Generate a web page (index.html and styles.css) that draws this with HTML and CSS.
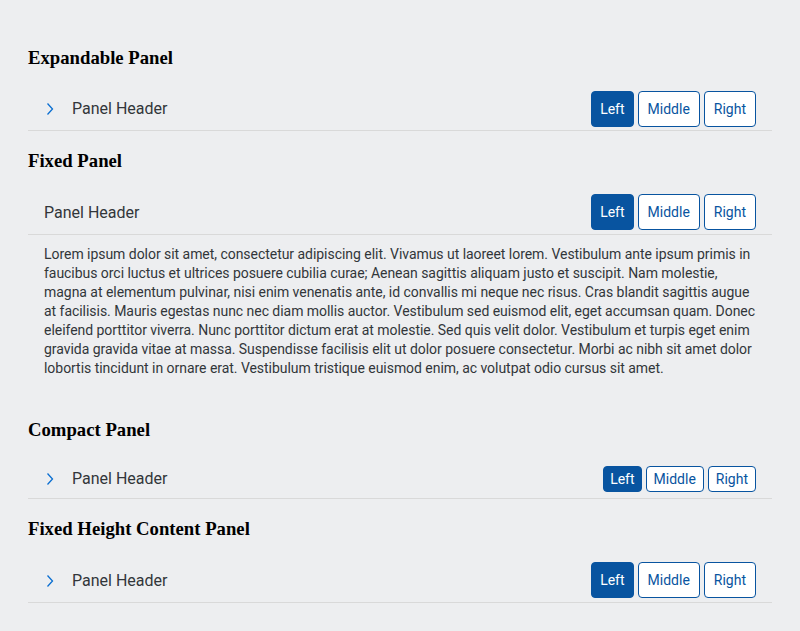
FILE: index.html
```html
<!DOCTYPE html>
<html>
<head>
<meta charset="utf-8">
<link rel="stylesheet" href="styles.css">
</head>
<body>
<div class="page">
  <h3>Expandable Panel</h3>
  <div class="panel">
    <div class="panel-header">
      <span class="chev"><svg width="8" height="14" viewBox="0 0 8 14"><path d="M1.5 1.5 L6.5 7 L1.5 12.5" fill="none" stroke="#0a6ed1" stroke-width="1.3"/></svg></span>
      <span class="title">Panel Header</span>
      <div class="seg">
        <button class="btn active">Left</button>
        <button class="btn">Middle</button>
        <button class="btn">Right</button>
      </div>
    </div>
  </div>

  <h3>Fixed Panel</h3>
  <div class="panel">
    <div class="panel-header">
      <span class="title">Panel Header</span>
      <div class="seg">
        <button class="btn active">Left</button>
        <button class="btn">Middle</button>
        <button class="btn">Right</button>
      </div>
    </div>
    <div class="panel-content">Lorem ipsum dolor sit amet, consectetur adipiscing elit. Vivamus ut laoreet lorem. Vestibulum ante ipsum primis in faucibus orci luctus et ultrices posuere cubilia curae; Aenean sagittis aliquam justo et suscipit. Nam molestie, magna at elementum pulvinar, nisi enim venenatis ante, id convallis mi neque nec risus. Cras blandit sagittis augue at facilisis. Mauris egestas nunc nec diam mollis auctor. Vestibulum sed euismod elit, eget accumsan quam. Donec eleifend porttitor viverra. Nunc porttitor dictum erat at molestie. Sed quis velit dolor. Vestibulum et turpis eget enim gravida gravida vitae at massa. Suspendisse facilisis elit ut dolor posuere consectetur. Morbi ac nibh sit amet dolor lobortis tincidunt in ornare erat. Vestibulum tristique euismod enim, ac volutpat odio cursus sit amet.</div>
  </div>

  <h3>Compact Panel</h3>
  <div class="panel">
    <div class="panel-header compact">
      <span class="chev"><svg width="8" height="14" viewBox="0 0 8 14"><path d="M1.5 1.5 L6.5 7 L1.5 12.5" fill="none" stroke="#0a6ed1" stroke-width="1.3"/></svg></span>
      <span class="title">Panel Header</span>
      <div class="seg">
        <button class="btn active">Left</button>
        <button class="btn">Middle</button>
        <button class="btn">Right</button>
      </div>
    </div>
  </div>

  <h3>Fixed Height Content Panel</h3>
  <div class="panel">
    <div class="panel-header">
      <span class="chev"><svg width="8" height="14" viewBox="0 0 8 14"><path d="M1.5 1.5 L6.5 7 L1.5 12.5" fill="none" stroke="#0a6ed1" stroke-width="1.3"/></svg></span>
      <span class="title">Panel Header</span>
      <div class="seg">
        <button class="btn active">Left</button>
        <button class="btn">Middle</button>
        <button class="btn">Right</button>
      </div>
    </div>
  </div>
</div>
</body>
</html>
```
FILE: styles.css
```css
html, body {
  background: #edeef0;
}
body {
  margin: 8px;
  font-family: "Times New Roman", "Liberation Serif", serif;
}
.page {
  padding: 20px;
}
h3 {
  font-size: 18.72px;
  font-weight: bold;
  margin: 18.72px 0;
  color: #000;
}
.panel {
  font-family: Roboto, "Noto Sans", sans-serif;
  color: #32363a;
}
.panel-header {
  box-sizing: border-box;
  height: 44px;
  display: flex;
  align-items: center;
  padding: 0 16px;
  border-bottom: 1px solid #d9d9d9;
}
.panel-header.compact {
  height: 40px;
}
.chev {
  width: 12px;
  display: flex;
  justify-content: center;
  margin-right: 16px;
  margin-top: 1px;
}
.title {
  font-size: 16px;
  flex: 1;
}
.seg {
  display: flex;
  gap: 4px;
}
.btn {
  font-family: Roboto, "Noto Sans", sans-serif;
  font-size: 14px;
  height: 36px;
  padding: 0 9px;
  border-radius: 4px;
  border: 1px solid #0854a0;
  background: #fff;
  color: #0854a0;
  cursor: pointer;
}
.btn.active {
  background: #0854a0;
  color: #fff;
  padding: 0 8px;
}
.compact .btn {
  height: 26px;
  padding: 0 7px;
}
.compact .btn.active {
  padding: 0 6px;
}
.panel-content {
  font-size: 14px;
  line-height: 19px;
  letter-spacing: -0.04px;
  padding: 10px 14px 22px 16px;
}
```
